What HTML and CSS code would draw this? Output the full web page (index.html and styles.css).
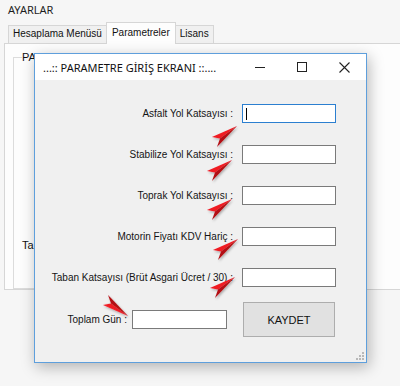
FILE: index.html
```html
<!DOCTYPE html>
<html lang="tr">
<head>
<meta charset="utf-8">
<title>AYARLAR</title>
<link rel="stylesheet" href="styles.css">
</head>
<body>
<div class="form">
  <div class="app-title">AYARLAR</div>
  <div class="tabs">
    <div class="tab">Hesaplama Menüsü</div>
    <div class="tab active">Parametreler</div>
    <div class="tab">Lisans</div>
  </div>
  <div class="tabpage">
    <fieldset class="groupbox">
      <legend class="legend">PA</legend>
      <div class="gb-label">Ta</div>
    </fieldset>
  </div>
</div>

<div class="dialog">
  <div class="titlebar">
    <div class="dlg-title">...:: PARAMETRE GİRİŞ EKRANI ::....</div>
    <div class="controls">
      <div class="ctl ctl-min"><svg width="10" height="10" viewBox="0 0 10 10"><path d="M0 5.5H10" stroke="#222" stroke-width="1"/></svg></div>
      <div class="ctl ctl-max"><svg width="10" height="10" viewBox="0 0 10 10"><rect x="0.5" y="0.5" width="9" height="9" fill="none" stroke="#222" stroke-width="1"/></svg></div>
      <div class="ctl ctl-close"><svg width="11" height="11" viewBox="0 0 11 11"><path d="M0.5 0.5L10.5 10.5M10.5 0.5L0.5 10.5" stroke="#222" stroke-width="1.1"/></svg></div>
    </div>
  </div>
  <div class="dlg-body">
    <div class="fields">
      <div class="lbl">Asfalt Yol Katsayısı :</div>
      <div class="textbox focused"><span class="caret"></span></div>
      <div class="lbl">Stabilize Yol Katsayısı :</div>
      <div class="textbox"></div>
      <div class="lbl">Toprak Yol Katsayısı :</div>
      <div class="textbox"></div>
      <div class="lbl">Motorin Fiyatı KDV Hariç :</div>
      <div class="textbox"></div>
      <div class="lbl">Taban Katsayısı (Brüt Asgari Ücret / 30) :</div>
      <div class="textbox"></div>
    </div>
    <div class="last-row">
      <div class="lbl lbl-total">Toplam Gün :</div>
      <div class="textbox textbox-total"></div>
      <div class="btn">KAYDET</div>
    </div>
    <svg class="grip" width="8" height="8" viewBox="0 0 8 8">
      <rect x="6" y="0" width="2" height="2" fill="#b8b8b8"/>
      <rect x="3" y="3" width="2" height="2" fill="#b8b8b8"/>
      <rect x="6" y="3" width="2" height="2" fill="#b8b8b8"/>
      <rect x="0" y="6" width="2" height="2" fill="#b8b8b8"/>
      <rect x="3" y="6" width="2" height="2" fill="#b8b8b8"/>
      <rect x="6" y="6" width="2" height="2" fill="#b8b8b8"/>
    </svg>
  </div>
</div>

<svg class="arrows" width="400" height="386" viewBox="0 0 400 386">
  <defs>
    <g id="arr">
      <path d="M25 0 L0 11 L8 12.5 Z" fill="#f01a22"/>
      <path d="M25 0 L8 12.5 L5 21 Z" fill="#b30c12"/>
    </g>
    <filter id="sh" x="-30%" y="-30%" width="160%" height="160%">
      <feDropShadow dx="1" dy="1.5" stdDeviation="1.2" flood-color="#000" flood-opacity="0.3"/>
    </filter>
  </defs>
  <g filter="url(#sh)">
    <use href="#arr" transform="translate(212 126)"/>
    <use href="#arr" transform="translate(207 160)"/>
    <use href="#arr" transform="translate(207 199)"/>
    <use href="#arr" transform="translate(213 239)"/>
    <use href="#arr" transform="translate(210 277)"/>
    <use href="#arr" transform="translate(103 316) scale(1 -1)"/>
  </g>
</svg>
</body>
</html>
```

FILE: styles.css
```css
html, body {
  margin: 0;
  padding: 0;
}
body {
  width: 400px;
  height: 386px;
  overflow: hidden;
  background: #f6f6f6;
  position: relative;
  font-family: "Liberation Sans", Arial, sans-serif;
  font-size: 10px;
  color: #111;
}
.form {
  display: flex;
  flex-direction: column;
}
.app-title {
  height: 20px;
  padding-left: 8px;
  font-family: "Noto Sans", sans-serif;
  font-size: 11px;
  line-height: 20px;
  color: #1e1e1e;
}
.tabs {
  display: flex;
  align-items: flex-end;
  height: 23px;
  padding-left: 8px;
}
.tab {
  height: 17px;
  line-height: 16px;
  padding: 0 4px;
  border: 1px solid #d6d6d6;
  border-bottom: none;
  background: #f0f0f0;
  margin-right: -1px;
  color: #111;
  white-space: nowrap;
}
.tab.active {
  height: 21px;
  line-height: 19px;
  padding: 0 5px;
  background: #fdfdfd;
  margin-bottom: -1px;
  position: relative;
  z-index: 1;
}
.tabpage {
  margin-left: 4px;
  height: 247px;
  border: 1px solid #d6d6d6;
  border-right: none;
  background: #fdfdfd;
  padding: 7px 0 0 8px;
  box-sizing: border-box;
}
.groupbox {
  margin: 0;
  width: 320px;
  height: 238px;
  box-sizing: border-box;
  border: 1px solid #dcdcdc;
  padding: 0 0 0 8px;
}
.legend {
  padding: 0;
  margin-left: 0;
  line-height: 12px;
  font-size: 11px;
}
.gb-label {
  margin-top: 176px;
  font-size: 11px;
  line-height: 12px;
}

/* dialog window */
.dialog {
  position: absolute;
  left: 34px;
  top: 53px;
  width: 333px;
  height: 310px;
  box-sizing: border-box;
  border: 1px solid #5e9fdc;
  background: #f0f0f0;
  box-shadow: 2px 4px 14px rgba(0, 0, 0, 0.28);
  display: flex;
  flex-direction: column;
  z-index: 2;
}
.titlebar {
  height: 26px;
  background: #fff;
  display: flex;
  align-items: center;
  flex: none;
}
.dlg-title {
  padding-left: 8px;
  font-family: "Noto Sans", sans-serif;
  font-size: 11px;
  color: #111;
  white-space: nowrap;
}
.controls {
  margin-left: auto;
  display: flex;
  height: 100%;
}
.ctl {
  height: 100%;
  display: flex;
  align-items: center;
  justify-content: center;
}
.ctl-min { width: 40px; }
.ctl-max { width: 43px; }
.ctl-close { width: 43px; }

.dlg-body {
  flex: 1;
  position: relative;
  padding-top: 24px;
}
.fields {
  display: grid;
  grid-template-columns: 198px 94px;
  column-gap: 9px;
  row-gap: 22px;
  align-items: center;
}
.lbl {
  text-align: right;
  white-space: nowrap;
  color: #141414;
}
.textbox {
  height: 19px;
  box-sizing: border-box;
  border: 1px solid #7a7a7a;
  background: #fff;
  position: relative;
}
.textbox.focused {
  border-color: #2b7fd0;
  display: flex;
  align-items: center;
  padding-left: 3px;
}
.caret {
  width: 1px;
  height: 12px;
  background: #000;
}
.last-row {
  display: flex;
  align-items: center;
  margin-top: 15px;
}
.lbl-total {
  width: 92px;
  margin-right: 5px;
}
.textbox-total {
  width: 95px;
}
.btn {
  margin-left: 16px;
  width: 92px;
  height: 35px;
  box-sizing: border-box;
  border: 1px solid #adadad;
  background: #e1e1e1;
  display: flex;
  align-items: center;
  justify-content: center;
  font-size: 11px;
  color: #111;
}
.grip {
  position: absolute;
  right: 2px;
  bottom: 2px;
}
.arrows {
  position: absolute;
  left: 0;
  top: 0;
  pointer-events: none;
  z-index: 3;
}
```
